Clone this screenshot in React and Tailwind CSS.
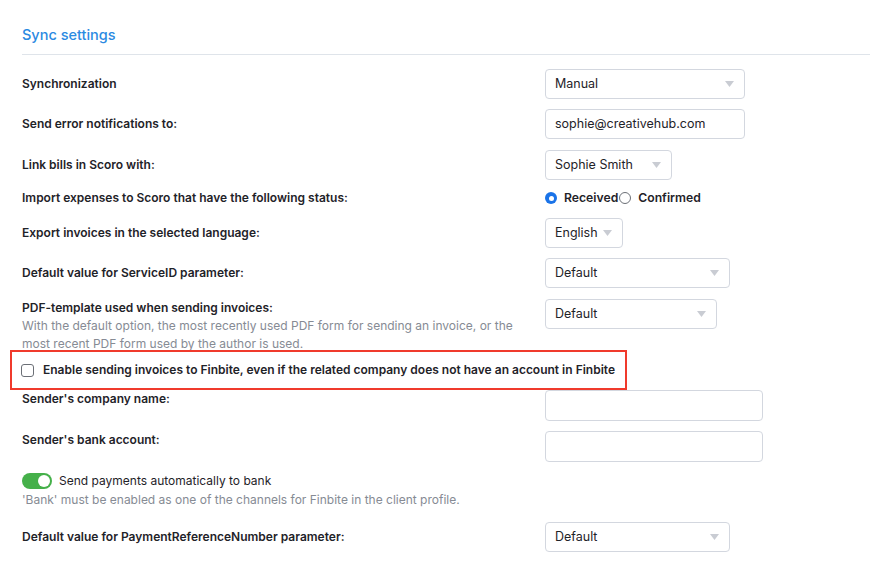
const font = { fontFamily: 'Inter, "Noto Sans", sans-serif' };

function Caret() {
  return (
    <svg width="9" height="6" viewBox="0 0 9 6" className="shrink-0">
      <path d="M0 0 L9 0 L4.5 6 Z" fill="#c9ccd3" />
    </svg>
  );
}

function Select({ value, width }) {
  return (
    <div
      className="flex h-[30px] items-center justify-between rounded-[4px] border border-[#d3d7df] bg-white pl-[9px] pr-[10px] text-[12.5px] text-[#1f2329]"
      style={{ width }}
    >
      <span>{value}</span>
      <Caret />
    </div>
  );
}

function TextInput({ value, width, tall }) {
  return (
    <div
      className={`flex ${tall ? 'h-[31px]' : 'h-[30px]'} items-center rounded-[4px] border border-[#d3d7df] bg-white pl-[9px] text-[12.5px] text-[#1f2329]`}
      style={{ width }}
    >
      {value}
    </div>
  );
}

function Row({ label, children, top, className = '' }) {
  return (
    <div className={`flex ${top ? 'items-start' : 'items-center'} ${className}`}>
      <div className="w-[523px] shrink-0 text-[12px] font-semibold leading-[18px] text-[#1f2329]">{label}</div>
      {children}
    </div>
  );
}

export default function App() {
  return (
    <div className="min-h-[563px] w-[890px] bg-white pl-[22px] pr-[20px]" style={font}>
      <div className="pt-[25px]">
        <h2 className="text-[14.5px] font-medium leading-[20px] text-[#2b8ae2]">Sync settings</h2>
        <div className="mt-[9px] h-px bg-[#dfe4ea]" />
      </div>

      <div className="mt-[14px] flex flex-col">
        <Row label="Synchronization">
          <Select value="Manual" width={200} />
        </Row>
        <Row label="Send error notifications to:" className="mt-[10px]">
          <TextInput value="sophie@creativehub.com" width={200} />
        </Row>
        <Row label="Link bills in Scoro with:" className="mt-[11px]">
          <Select value="Sophie Smith" width={127} />
        </Row>
        <Row label="Import expenses to Scoro that have the following status:" className="mt-[10px] h-[16px]">
          <div className="flex items-center text-[12.2px] font-semibold text-[#1f2329]">
            <span className="flex h-[12px] w-[12px] items-center justify-center rounded-full bg-[#1a73e8]">
              <span className="h-[5px] w-[5px] rounded-full bg-white" />
            </span>
            <span className="ml-[7px]">Received</span>
            <span className="ml-[1px] h-[12px] w-[12px] rounded-full border border-[#6b6f76] bg-white" />
            <span className="ml-[7px]">Confirmed</span>
          </div>
        </Row>
        <Row label="Export invoices in the selected language:" className="mt-[12px]">
          <Select value="English" width={78} />
        </Row>
        <Row label="Default value for ServiceID parameter:" className="mt-[10px]">
          <Select value="Default" width={185} />
        </Row>
        <div className="mt-[11px] flex items-start">
          <div className="w-[523px] shrink-0 pr-[10px]">
            <div className="text-[12px] font-semibold leading-[18px] text-[#1f2329]">PDF-template used when sending invoices:</div>
            <div className="text-[12px] leading-[18px] text-[#868b94]">
              With the default option, the most recently used PDF form for sending an invoice, or the most recent PDF form used by the author is used.
            </div>
          </div>
          <Select value="Default" width={172} />
        </div>

        {/* highlighted option */}
        <div className="ml-[-12px] mt-[-3px] flex h-[40px] w-[617px] items-center border-[2.5px] border-[#f03a2c] pl-[9px]">
          <span className="h-[13px] w-[13px] rounded-[3px] border border-[#6b6f76] bg-white" />
          <span className="ml-[9px] text-[12px] font-semibold text-[#1f2329]">
            Enable sending invoices to Finbite, even if the related company does not have an account in Finbite
          </span>
        </div>

        <Row label="Sender's company name:" top>
          <TextInput value="" width={218} tall />
        </Row>
        <Row label="Sender's bank account:" top className="mt-[10px]">
          <TextInput value="" width={218} tall />
        </Row>

        <div className="mt-[10px]">
          <div className="flex items-center">
            <span className="flex h-[16px] w-[30px] items-center justify-end rounded-full bg-[#45b04a] pr-[2px]">
              <span className="h-[12px] w-[12px] rounded-full bg-white" />
            </span>
            <span className="ml-[7px] text-[12px] leading-[18px] text-[#1f2329]">Send payments automatically to bank</span>
          </div>
          <div className="mt-[1px] text-[12px] leading-[18px] text-[#868b94]">
            'Bank' must be enabled as one of the channels for Finbite in the client profile.
          </div>
        </div>

        <Row label="Default value for PaymentReferenceNumber parameter:" className="mt-[13px]">
          <Select value="Default" width={185} />
        </Row>
      </div>
    </div>
  );
}
